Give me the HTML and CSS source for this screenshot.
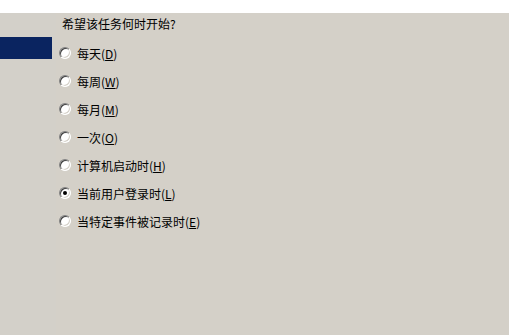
FILE: index.html
```html
<!DOCTYPE html>
<html lang="zh-CN">
<head>
    <meta charset="UTF-8">
    <title>任务计划向导</title>
    <link rel="stylesheet" href="styles.css">
</head>
<body>

<div class="top-strip"></div>

<div class="wizard">
    <div class="side">
        <div class="side-mark"></div>
    </div>

    <div class="main">
        <div class="title">希望该任务何时开始?</div>

        <label class="option"><span class="radio"></span>每天(<u>D</u>)</label>
        <label class="option"><span class="radio"></span>每周(<u>W</u>)</label>
        <label class="option"><span class="radio"></span>每月(<u>M</u>)</label>
        <label class="option"><span class="radio"></span>一次(<u>O</u>)</label>
        <label class="option"><span class="radio"></span>计算机启动时(<u>H</u>)</label>
        <label class="option"><span class="radio checked"></span>当前用户登录时(<u>L</u>)</label>
        <label class="option"><span class="radio"></span>当特定事件被记录时(<u>E</u>)</label>
    </div>
</div>

</body>
</html>
```

FILE: styles.css
```css
html, body {
    margin: 0;
    padding: 0;
    height: 100%;
}

body {
    font-family: "Noto Sans CJK SC", "DejaVu Sans", sans-serif;
    font-size: 12px;
    color: #000;
    background-color: #d4d0c8;
}

.top-strip {
    height: 13px;
    background-color: #fff;
}

.wizard {
    display: flex;
    height: calc(100% - 13px);
}

.side {
    width: 56px;
    background-color: #d3d0c9;
}

.side-mark {
    margin-top: 24px;
    width: 52px;
    height: 22px;
    background-color: #0a2460;
}

.main {
    flex: 1;
    padding-left: 3px;
}

.title {
    margin-top: 1px;
    margin-bottom: 5px;
    padding-left: 3px;
    height: 20px;
    line-height: 20px;
}

.option {
    display: flex;
    align-items: center;
    height: 28px;
}

.option u {
    text-decoration-thickness: 1px;
    text-underline-offset: 1px;
}

/* classic sunken radio button */
.radio {
    position: relative;
    box-sizing: border-box;
    width: 12px;
    height: 12px;
    margin-right: 6px;
    border-radius: 50%;
    border: 1px solid;
    border-color: #808080 #fff #fff #808080;
    background-color: #fff;
    box-shadow: inset 1px 1px 0 #404040, inset -1px -1px 0 #d4d0c8;
}

.radio.checked::after {
    content: "";
    position: absolute;
    left: 3px;
    top: 3px;
    width: 4px;
    height: 4px;
    border-radius: 50%;
    background-color: #000;
}
```
